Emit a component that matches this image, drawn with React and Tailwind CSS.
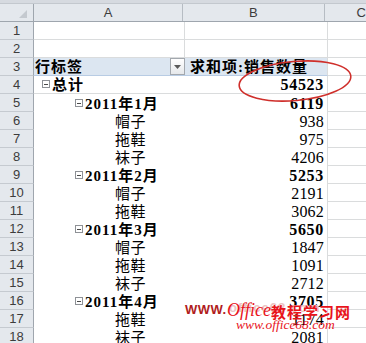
import React from "react";

const rows = [
  { n: 1, kind: "grid" },
  { n: 2, kind: "grid" },
  { n: 3, kind: "head" },
  { n: 4, kind: "total", label: "总计", level: 0, value: "54523" },
  { n: 5, label: "2011年1月", level: 1, value: "6119" },
  { n: 6, label: "帽子", level: 2, value: "938" },
  { n: 7, label: "拖鞋", level: 2, value: "975" },
  { n: 8, label: "袜子", level: 2, value: "4206" },
  { n: 9, label: "2011年2月", level: 1, value: "5253" },
  { n: 10, label: "帽子", level: 2, value: "2191" },
  { n: 11, label: "拖鞋", level: 2, value: "3062" },
  { n: 12, label: "2011年3月", level: 1, value: "5650" },
  { n: 13, label: "帽子", level: 2, value: "1847" },
  { n: 14, label: "拖鞋", level: 2, value: "1091" },
  { n: 15, label: "袜子", level: 2, value: "2712" },
  { n: 16, label: "2011年4月", level: 1, value: "3705" },
  { n: 17, label: "拖鞋", level: 2, value: "1174" },
  { n: 18, label: "袜子", level: 2, value: "2081" },
];

const MinusBox = () => (
  <span className="mb-[5px] mr-[2px] flex h-[8px] w-[8px] shrink-0 items-center justify-center border border-[#8e9196] bg-white">
    <span className="h-px w-[4px] bg-[#4a4a4a]" />
  </span>
);

const RowNum = ({ n }) => (
  <div className="flex w-[34px] shrink-0 items-center justify-center border-b border-r border-b-[#c5cad0] border-r-[#9fa6ae] bg-[#e4e8ed] font-['Liberation_Sans',sans-serif] text-[13px] text-[#3c3c3c]">
    {n}
  </div>
);

const Row = ({ row }) => {
  if (row.kind === "grid") {
    return (
      <div className="flex h-[18px]">
        <RowNum n={row.n} />
        <div className="w-[151px] border-b border-r border-[#dadcdd]" />
        <div className="w-[143px] border-b border-r border-[#dadcdd]" />
        <div className="flex-1 border-b border-[#dadcdd]" />
      </div>
    );
  }

  if (row.kind === "head") {
    return (
      <div className="flex h-[18px]">
        <RowNum n={row.n} />
        <div className="flex w-[151px] items-end justify-between border-b border-[#b8cce4] bg-[#dce6f1]">
          <span className="pl-px text-[15px] font-bold leading-none tracking-[1px] text-black">
            行标签
          </span>
          <span className="flex h-[17px] w-[15px] items-center justify-center border border-[#a3a8ae] bg-gradient-to-b from-white to-[#e6e8eb]">
            <svg width="7" height="4" viewBox="0 0 7 4">
              <path d="M0 0h7L3.5 4z" fill="#5a5a5a" />
            </svg>
          </span>
        </div>
        <div className="flex w-[143px] items-end border-b border-r border-b-[#b8cce4] border-r-[#dadcdd] bg-[#dce6f1] pl-[5px]">
          <span className="text-[15px] font-bold leading-none tracking-[1px] text-black">
            求和项:销售数量
          </span>
        </div>
        <div className="flex-1 border-b border-[#dadcdd]" />
      </div>
    );
  }

  const bold = row.level < 2;
  const indent =
    row.level === 0 ? "pl-[8px]" : row.level === 1 ? "pl-[41px]" : "pl-[81px]";

  return (
    <div className="flex h-[18px]">
      <RowNum n={row.n} />
      <div
        className={`flex w-[151px] items-end ${indent} ${
          row.kind === "total" ? "border-b border-[#dadcdd]" : ""
        }`}
      >
        {bold && <MinusBox />}
        <span
          className={`whitespace-nowrap text-[15px] leading-none text-black ${
            bold ? "font-bold tracking-[1px]" : "tracking-[0.5px]"
          }`}
        >
          {row.label}
        </span>
      </div>
      <div
        className={`flex w-[143px] items-end justify-end border-r border-[#dadcdd] pr-[3px] ${
          row.kind === "total" ? "border-b" : ""
        }`}
      >
        <span
          className={`text-[16px] leading-none text-black ${
            bold ? "font-bold tracking-[0.7px]" : "tracking-[0.2px]"
          }`}
        >
          {row.value}
        </span>
      </div>
      <div className="flex-1 border-b border-[#dadcdd]" />
    </div>
  );
};

export default function App() {
  return (
    <div className="relative h-[343px] w-[366px] overflow-hidden bg-white font-['Liberation_Serif','Noto_Sans_CJK_SC',serif]">
      {/* top band */}
      <div className="h-[4px] border-b border-[#c3c8ce] bg-[#d6dae0]" />

      {/* column headers */}
      <div className="flex h-[18px] border-b border-[#9fa6ae] bg-[#e4e8ed] font-['Liberation_Sans',sans-serif] text-[13px] text-[#3c3c3c]">
        <div className="relative w-[34px] shrink-0 border-r border-[#9fa6ae]">
          <svg
            className="absolute right-[6px] bottom-[3px]"
            width="8"
            height="8"
            viewBox="0 0 8 8"
          >
            <path d="M8 0v8H0z" fill="#c4c9cf" />
          </svg>
        </div>
        <div className="flex w-[151px] items-center justify-center border-r border-[#b6bcc3]">
          A
        </div>
        <div className="flex w-[143px] items-center justify-center border-r border-[#b6bcc3]">
          B
        </div>
        <div className="flex flex-1 items-center pl-[32px]">C</div>
      </div>

      {rows.map((row) => (
        <Row key={row.n} row={row} />
      ))}

      {/* red highlight ring */}
      <svg
        className="absolute left-[234px] top-[56px]"
        width="124"
        height="52"
        viewBox="0 0 124 52"
      >
        <ellipse
          cx="61"
          cy="25"
          rx="56"
          ry="19.5"
          transform="rotate(-5 61 25)"
          fill="none"
          stroke="#cf2f2b"
          strokeWidth="1.6"
        />
      </svg>

      {/* watermark */}
      <div className="absolute left-[185px] top-[300px] font-['Liberation_Sans',sans-serif] text-[13px] font-black tracking-[0.5px] text-[#b01d1d]">
        WWW.
      </div>
      <div className="absolute left-[229px] top-[298px] font-['Liberation_Sans',sans-serif] text-[13px] font-bold tracking-[1px] text-[#ecc4c4]">
        office68.com
      </div>
      <div className="absolute left-[227px] top-[301px] flex items-end whitespace-nowrap text-[#e8141b]">
        <span className="text-[18px] italic leading-none">Office</span>
        <span className="font-['Noto_Sans_CJK_SC',sans-serif] text-[15px] font-bold leading-none tracking-[1px]">
          教程学习网
        </span>
      </div>
      <div className="absolute left-[236px] top-[318px] whitespace-nowrap text-[13.5px] italic leading-none text-[#e8141b]">
        www.office68.com
      </div>
    </div>
  );
}
